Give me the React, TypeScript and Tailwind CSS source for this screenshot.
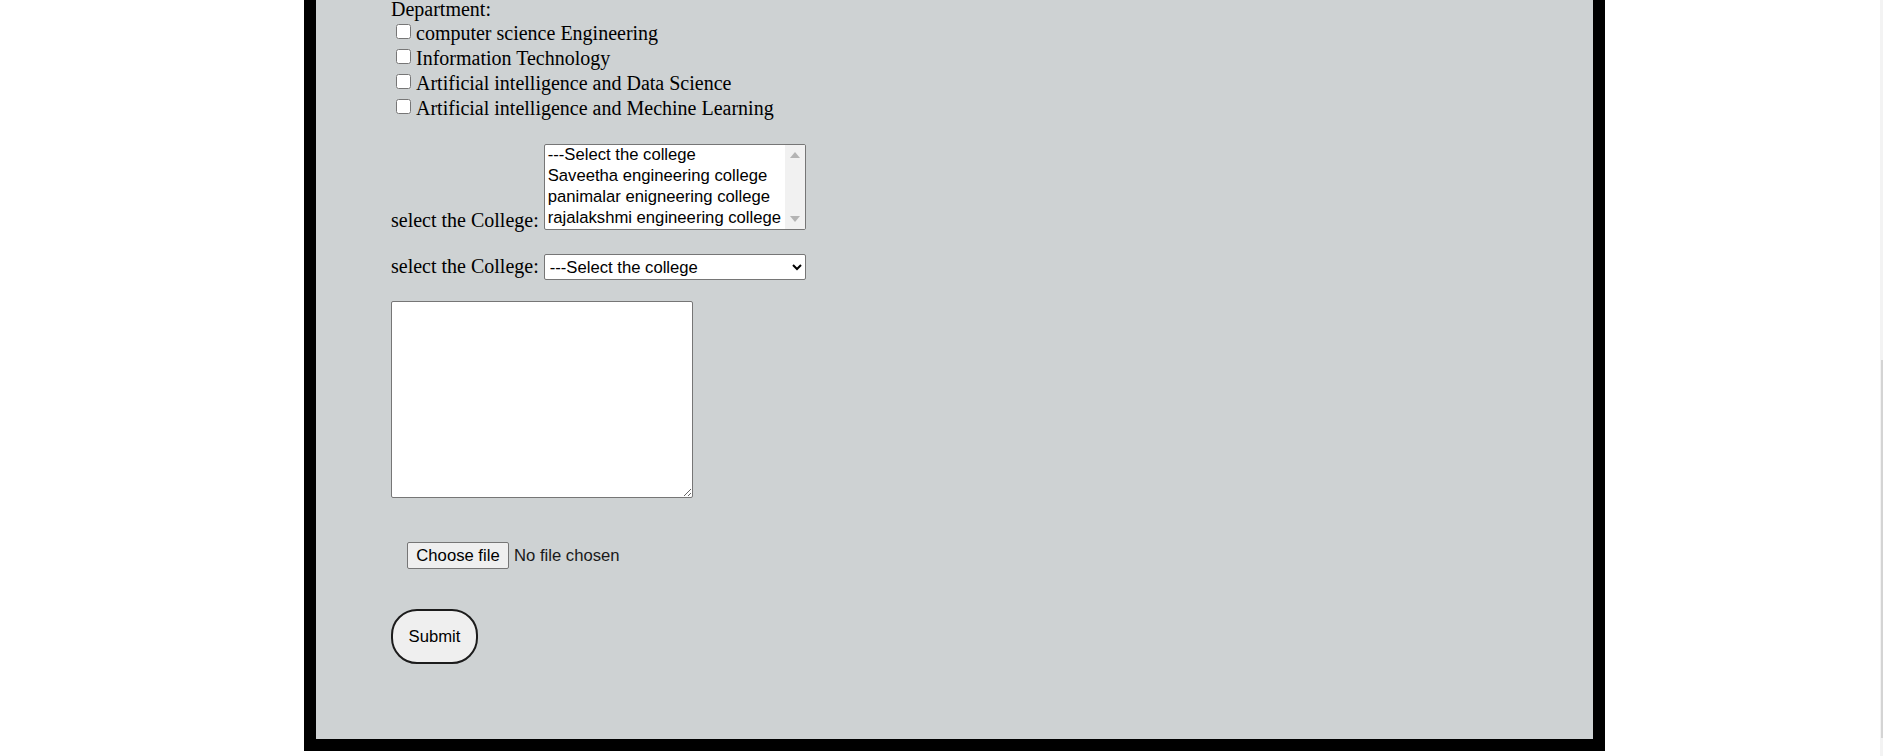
import React from 'react';

const departments = [
  'computer science Engineering',
  'Information Technology',
  'Artificial intelligence and Data Science',
  'Artificial intelligence and Mechine Learning',
];

const colleges = [
  '---Select the college',
  'Saveetha engineering college',
  'panimalar enigneering college',
  'rajalakshmi engineering college',
];

const App: React.FC = () => {
  return (
    <div className="relative h-[756px] w-full overflow-hidden bg-white text-black font-['Liberation_Serif',serif]">
      <div className="ml-[304px] flex h-[751px] w-[1301px] flex-col items-start border-x-[12px] border-b-[12px] border-black bg-[#ced2d3] pl-[75px] text-[20px]">
        <div className="-mt-[3px] h-[22px] leading-[24px]">Department:</div>

        {departments.map((dep, i) => (
          <label key={i} className="flex h-[25px] items-center leading-[22px]">
            <input type="checkbox" className="ml-[5px] mr-[5px] h-[15px] w-[15px]" />
            <span className="mt-[2px]">{dep}</span>
          </label>
        ))}

        <div className="mt-[25px] flex items-end">
          <span className="mb-[-1px] mr-[5px] leading-[22px]">select the College:</span>
          <div
            role="listbox"
            className="flex h-[86px] w-[262px] overflow-hidden rounded-[2px] border border-[#767676] bg-white text-[16.67px] leading-[21px] font-['Liberation_Sans',Arial,sans-serif]"
          >
            <div className="-mt-[1px] flex-1 pl-[3px]">
              {colleges.map((c, i) => (
                <div key={i} role="option" className="h-[21px] whitespace-nowrap">
                  {c}
                </div>
              ))}
            </div>
            <div className="flex w-[20px] flex-col items-center justify-between bg-[#f1f1f1] py-[7px]">
              <svg width="10" height="6" viewBox="0 0 10 6">
                <polygon points="5,0 10,6 0,6" fill="#b4b4b4" />
              </svg>
              <svg width="10" height="6" viewBox="0 0 10 6">
                <polygon points="0,0 10,0 5,6" fill="#b4b4b4" />
              </svg>
            </div>
          </div>
        </div>

        <div className="mt-[24px] flex items-baseline">
          <span className="mr-[5px] leading-[22px]">select the College:</span>
          <select className="h-[26px] w-[262px] rounded-[2px] border border-[#767676] bg-white pl-[1px] text-[16.67px] text-black font-['Liberation_Sans',Arial,sans-serif]">
            {colleges.map((c, i) => (
              <option key={i}>{c}</option>
            ))}
          </select>
        </div>

        <textarea className="mt-[21px] h-[197px] w-[302px] rounded-[2px] border border-[#767676] bg-white" />

        <div className="ml-[16px] mt-[44px] flex items-center text-[16.67px] font-['Liberation_Sans',Arial,sans-serif]">
          <button className="h-[27px] w-[102px] rounded-[2px] border border-[#767676] bg-[#efefef] text-black">
            Choose file
          </button>
          <span className="ml-[5px] text-[#1a1a1a]">No file chosen</span>
        </div>

        <button className="mt-[40px] h-[55px] w-[87px] rounded-[26px] border-2 border-[#1c1c1c] bg-[#efefef] text-[16.67px] text-black font-['Liberation_Sans',Arial,sans-serif]">
          Submit
        </button>
      </div>

      <div className="absolute right-0 top-0 h-full w-[3px] bg-[#f3f3f3]">
        <div className="ml-[1px] mt-[360px] h-[378px] w-[2px] bg-[#d4d4d4]" />
      </div>
    </div>
  );
};

export default App;
